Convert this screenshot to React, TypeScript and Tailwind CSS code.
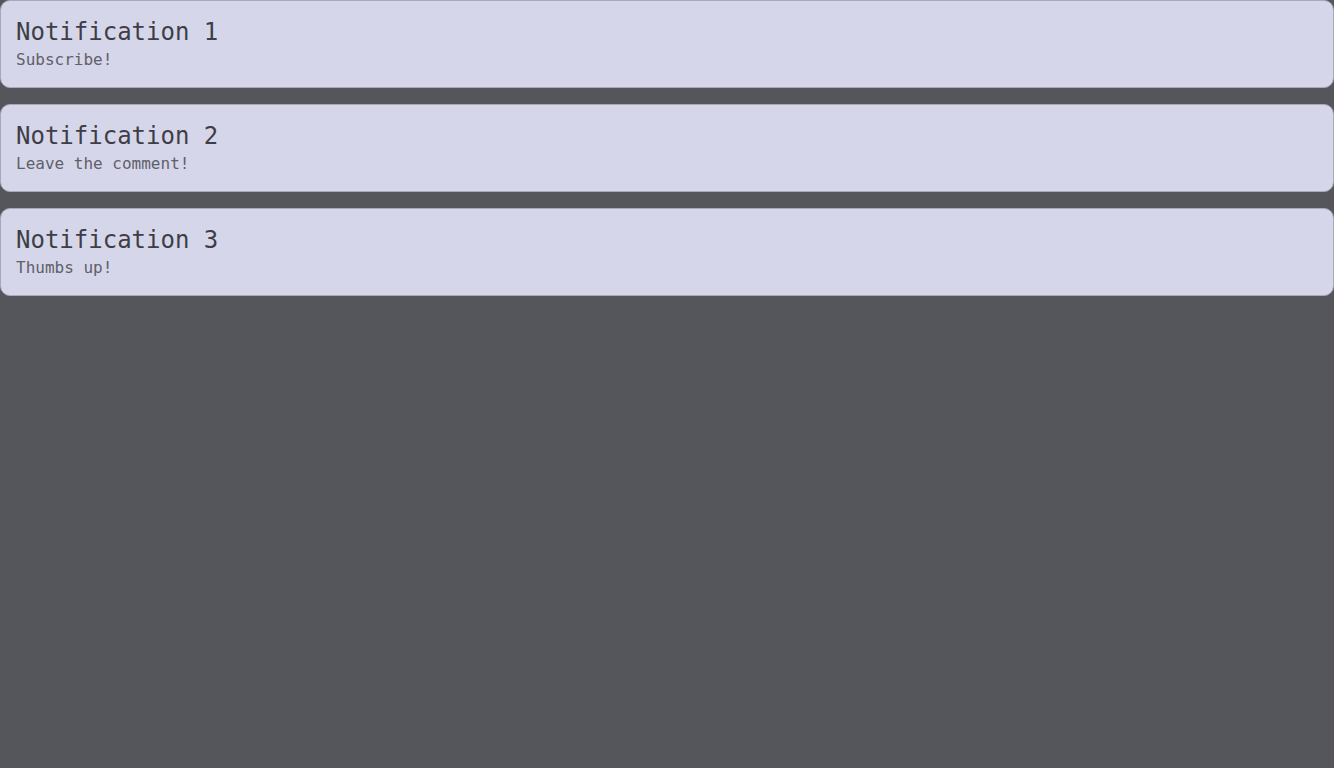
const notifications = [
  { title: "Notification 1", body: "Subscribe!" },
  { title: "Notification 2", body: "Leave the comment!" },
  { title: "Notification 3", body: "Thumbs up!" },
];

export default function App() {
  return (
    <div
      className="flex min-h-screen flex-col gap-4 bg-[#55565b]"
      style={{ fontFamily: '"DejaVu Sans Mono", monospace' }}
    >
      {notifications.map((n) => (
        <div
          key={n.title}
          className="rounded-[10px] border border-[#a9a9bb] bg-[#d6d6ea] p-[15px]"
        >
          <div className="text-2xl leading-8 text-[#3e3e46]">{n.title}</div>
          <div className="text-base leading-6 text-[#606068]">{n.body}</div>
        </div>
      ))}
    </div>
  );
}
